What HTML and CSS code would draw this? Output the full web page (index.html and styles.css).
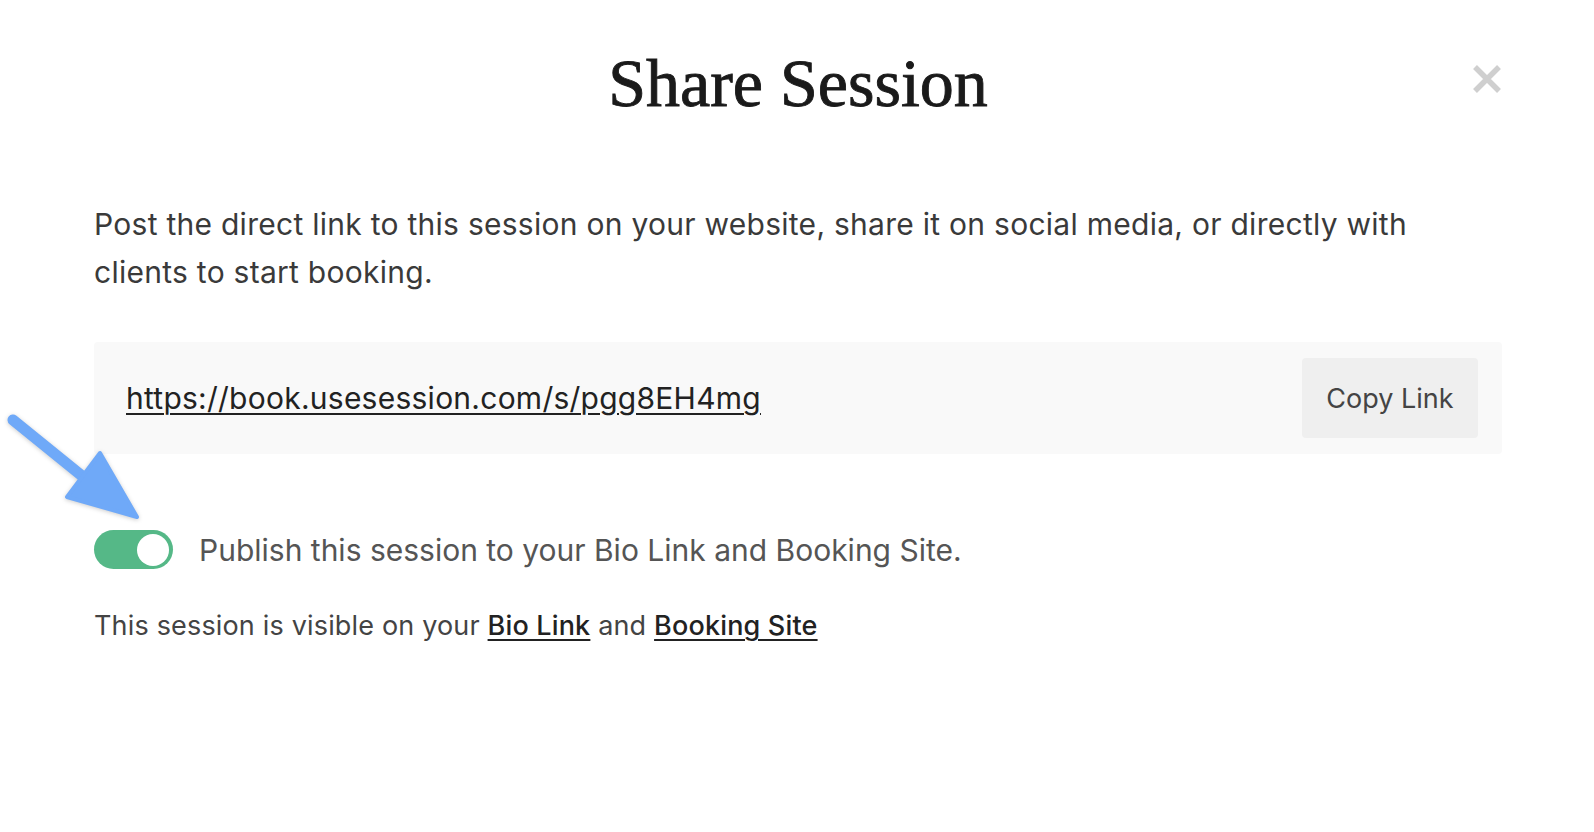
FILE: index.html
```html
<!DOCTYPE html>
<html lang="en">
<head>
  <meta charset="UTF-8" />
  <title>Share Session</title>
  <link rel="stylesheet" href="styles.css">
</head>
<body>
  <div class="modal">
    <h1 class="title">Share Session</h1>
    <button class="close" aria-label="Close">
      <svg width="30" height="30" viewBox="0 0 30 30">
        <path d="M3 3 L27 27 M27 3 L3 27" stroke="#cfcfcf" stroke-width="5.5" stroke-linecap="butt" fill="none"/>
      </svg>
    </button>

    <p class="intro">Post the direct link to this session on your website, share it on social media, or directly with clients to start booking.</p>

    <div class="link-box">
      <a class="link" href="#">https://book.usesession.com/s/pgg8EH4mg</a>
      <button class="copy">Copy Link</button>
    </div>

    <label class="toggle-row">
      <span class="toggle"><span class="knob"></span></span>
      <span class="toggle-label">Publish this session to your Bio Link and Booking Site.</span>
    </label>

    <p class="visible">This session is visible on your <a href="#">Bio Link</a> and <a href="#">Booking Site</a></p>
  </div>

  <svg class="arrow" width="150" height="130" viewBox="0 0 150 130">
    <path d="M13 20 L92 84" stroke="#6fa9f8" stroke-width="11" stroke-linecap="round" fill="none"/>
    <polygon points="100,53 67,97 137,117" fill="#6fa9f8" stroke="#6fa9f8" stroke-width="4" stroke-linejoin="round"/>
  </svg>
</body>
</html>
```

FILE: styles.css
```css
body {
  margin: 0;
  background: #fff;
  font-family: Inter, "Noto Sans", sans-serif;
  color: #3a3a3a;
}
.modal {
  position: relative;
  padding: 43px 92px 0 94px;
}
.title {
  margin: 0;
  text-align: center;
  font-family: "Liberation Serif", serif;
  font-weight: normal;
  font-size: 68px;
  line-height: 80px;
  color: #1a1a1a;
  -webkit-text-stroke: 0.9px #1a1a1a;
}
.close {
  position: absolute;
  top: 64px;
  right: 92px;
  padding: 0;
  border: none;
  background: none;
  cursor: pointer;
  line-height: 0;
}
.intro {
  margin: 77px 0 0;
  max-width: 1370px;
  font-size: 30px;
  line-height: 48px;
  letter-spacing: 0.27px;
}
.link-box {
  margin-top: 46px;
  background: #f9f9f9;
  border-radius: 4px;
  display: flex;
  align-items: center;
  justify-content: space-between;
  padding: 16px 24px 16px 32px;
}
.link {
  color: #222;
  font-size: 30px;
  letter-spacing: 0.25px;
  text-decoration: underline;
  text-underline-offset: 4px;
  text-decoration-thickness: 2px;
}
.copy {
  width: 176px;
  height: 80px;
  border: none;
  border-radius: 4px;
  background: #efefef;
  font-family: inherit;
  font-size: 27px;
  color: #444;
  cursor: pointer;
}
.toggle-row {
  margin-top: 76px;
  display: flex;
  align-items: center;
  gap: 26px;
}
.toggle {
  width: 79px;
  height: 39px;
  border-radius: 20px;
  background: #55b887;
  display: flex;
  align-items: center;
  justify-content: flex-end;
  padding-right: 4px;
  box-sizing: border-box;
}
.knob {
  width: 32px;
  height: 32px;
  border-radius: 50%;
  background: #fff;
}
.toggle-label {
  font-size: 30px;
  color: #555;
}
.visible {
  margin: 40px 0 0;
  font-size: 27px;
  letter-spacing: 0.17px;
  color: #444;
}
.visible a {
  color: #222;
  font-weight: 500;
  text-decoration: underline;
  text-underline-offset: 4px;
  text-decoration-thickness: 2px;
}
.arrow {
  position: absolute;
  left: 0;
  top: 400px;
  filter: drop-shadow(0 1px 2px rgba(0, 0, 0, 0.2));
}
```
